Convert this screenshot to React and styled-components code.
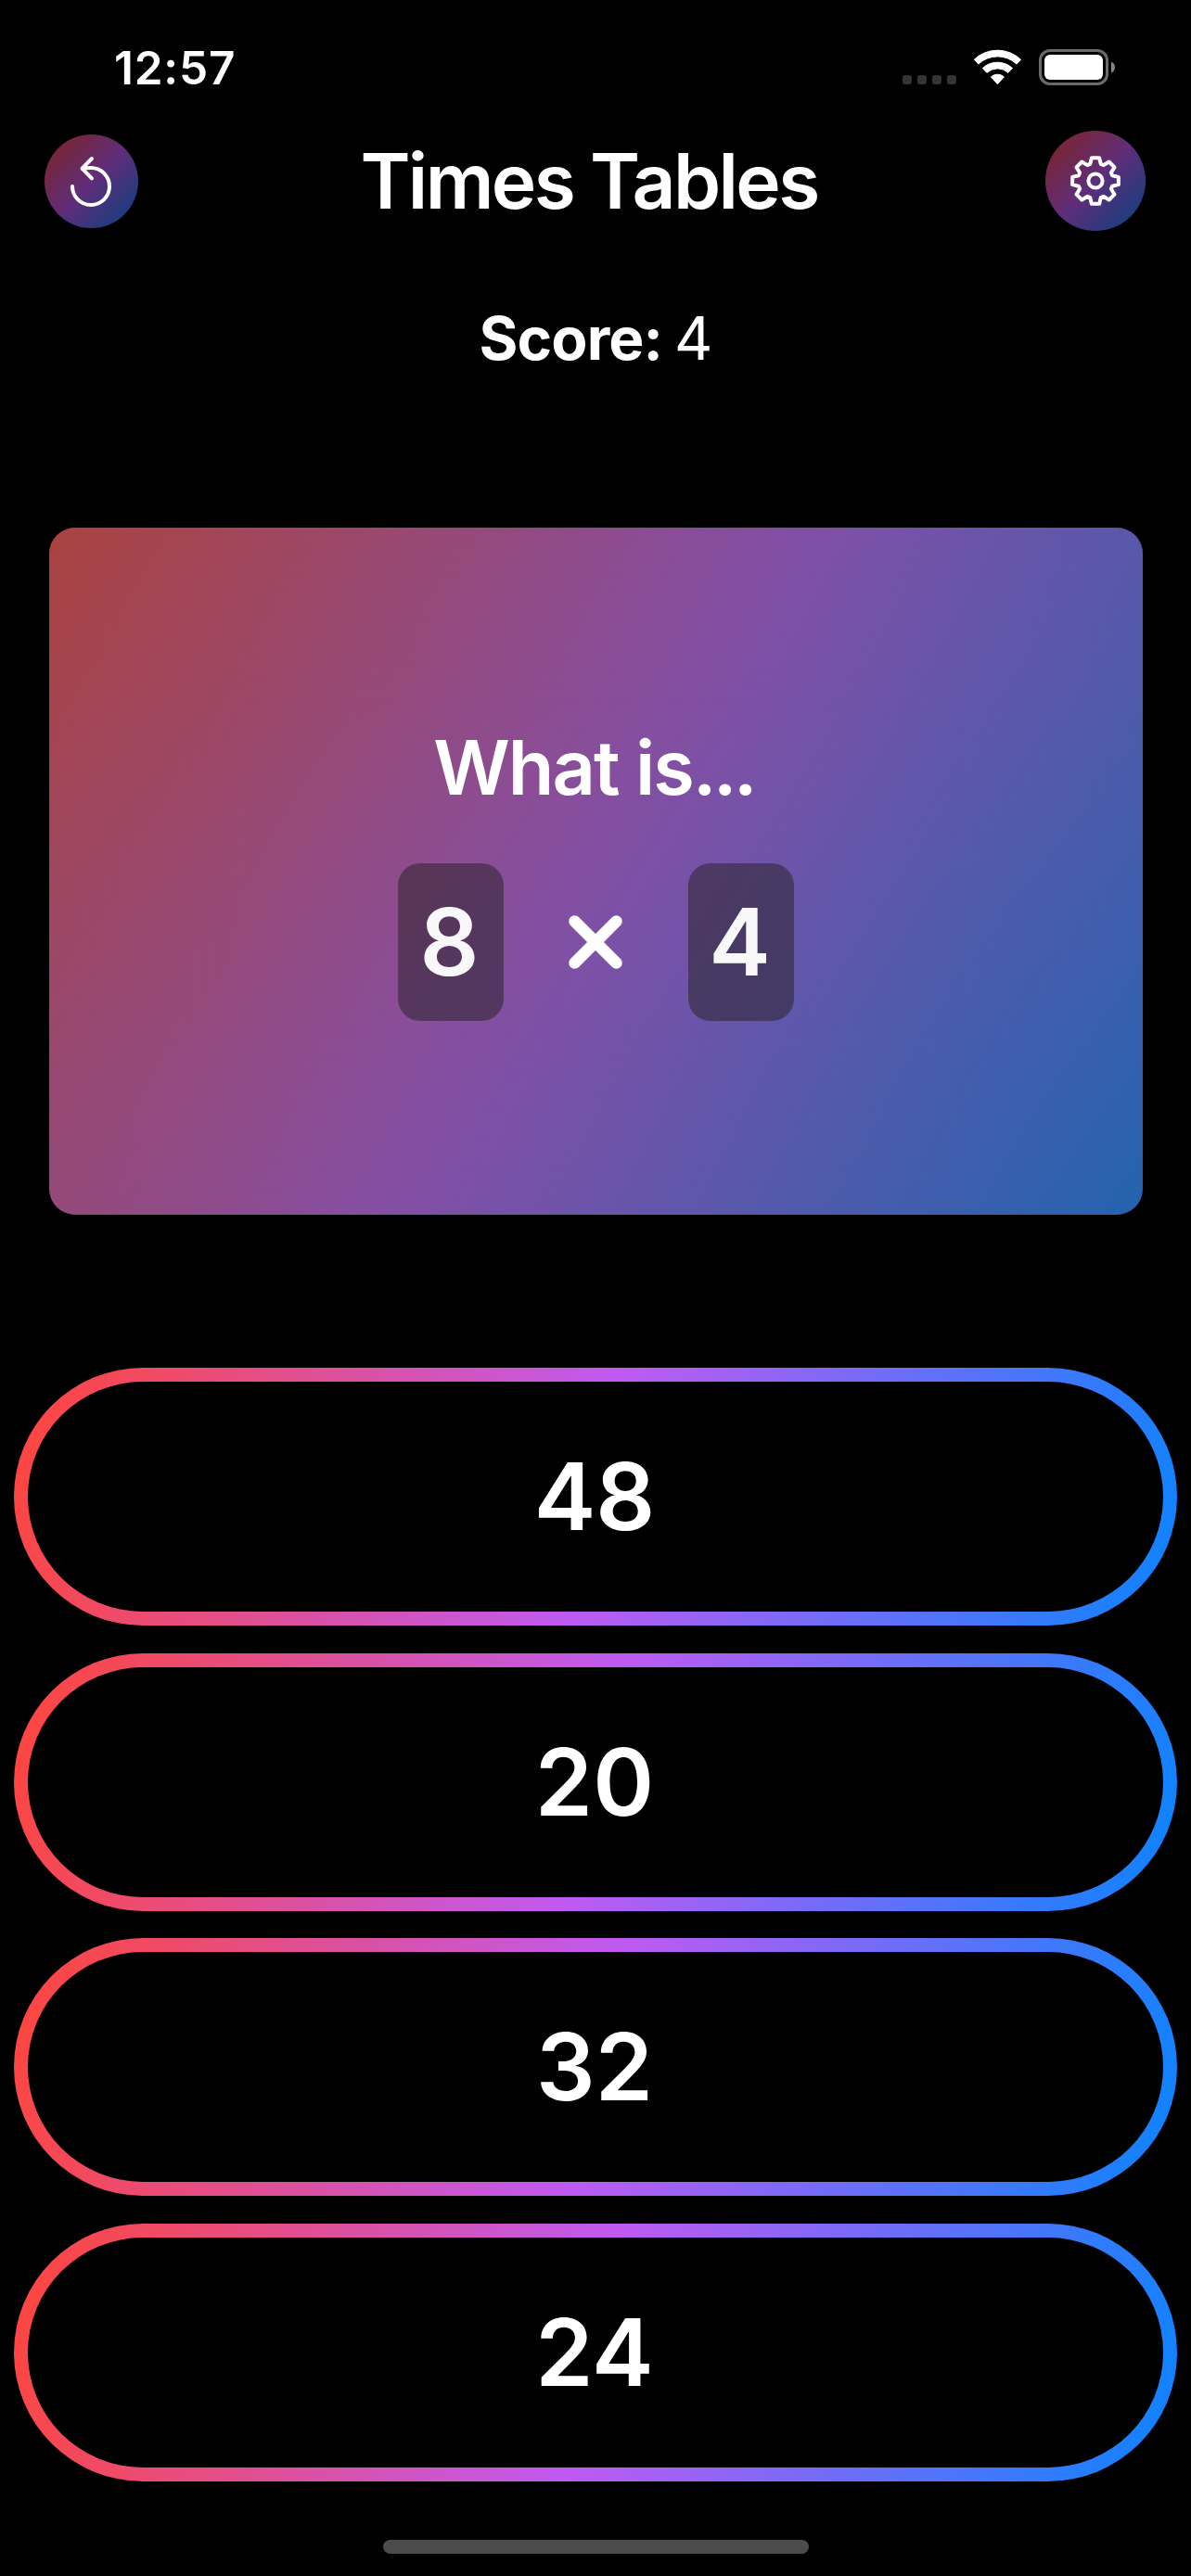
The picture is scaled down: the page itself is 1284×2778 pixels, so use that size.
import React from "react";
import styled, { createGlobalStyle } from "styled-components";

const GlobalStyle = createGlobalStyle`
  *, *::before, *::after { box-sizing: border-box; }
  html, body { margin: 0; background: #000; }
`;

const Screen = styled.main`
  width: 1284px;
  height: 2778px;
  overflow: hidden;
  display: flex;
  flex-direction: column;
  align-items: center;
  background: #000;
  color: #fff;
  font-family: Inter, "Liberation Sans", sans-serif;
`;

const StatusBar = styled.div`
  width: 100%;
  height: 141px;
  padding: 5px 82px 0 123px;
  display: flex;
  align-items: center;
  justify-content: space-between;
`;

const Clock = styled.time`
  font-size: 49.5px;
  font-weight: 600;
  line-height: 60px;
  letter-spacing: 0.8px;
`;

const StatusIcons = styled.div`
  display: flex;
  align-items: flex-end;
  height: 40px;
`;

const SignalDots = styled.div`
  display: flex;
  gap: 6px;
  margin: 0 19px 2px 0;
`;

const SignalDot = styled.span`
  width: 10px;
  height: 10px;
  border-radius: 3px;
  background: #343434;
`;

const WifiGlyph = styled.svg`
  width: 52px;
  height: 40px;
  margin-right: 18px;
`;

const BatteryGlyph = styled.svg`
  width: 82px;
  height: 40px;
`;

const Header = styled.header`
  width: 100%;
  height: 108px;
  padding: 0 49px 0 48px;
  display: flex;
  align-items: center;
  justify-content: space-between;
`;

const RoundButton = styled.button`
  width: ${(p) => p.$size}px;
  height: ${(p) => p.$size}px;
  padding: 0;
  border: 0;
  border-radius: 50%;
  color: #fff;
  background: linear-gradient(135deg, #80231d 0%, #602d79 50%, #054280 100%);

  svg { display: block; width: 100%; height: 100%; }
`;

const Title = styled.h1`
  margin: 0;
  padding: 2px 6px 0 0;
  font-size: 82px;
  font-weight: 600;
  line-height: 100px;
  letter-spacing: -2.65px;
`;

const Score = styled.p`
  margin: 76px 0 0;
  font-size: 64px;
  font-weight: 400;
  line-height: 80px;
  letter-spacing: -0.9px;
  word-spacing: -4px;

  strong { font-weight: 700; }
`;

const QuestionCard = styled.section`
  width: 1179px;
  height: 741px;
  margin-top: 164px;
  border-radius: 28px;
  overflow: hidden;
`;

const CardGradient = styled.div`
  height: 100%;
  background: linear-gradient(122.1deg, #ad433c 0%, #844fa7 50%, #2065b0 100%);
`;

const CardContent = styled.div`
  height: 100%;
  padding-top: 209px;
  display: flex;
  flex-direction: column;
  align-items: center;
  backdrop-filter: blur(88px);
`;

const Prompt = styled.h2`
  margin: 0;
  padding-right: 4px;
  font-size: 81px;
  font-weight: 600;
  line-height: 100px;
  letter-spacing: -2px;

  span { letter-spacing: -3.8px; }
`;

const Equation = styled.div`
  margin-top: 53px;
  width: 427px;
  display: flex;
  align-items: center;
  justify-content: space-between;
`;

const Factor = styled.span`
  width: 114px;
  height: 170px;
  padding-right: 2px;
  border-radius: 24px;
  display: grid;
  place-items: center;
  background: rgba(43, 36, 44, 0.55);
  color: #f8f7fa;
  font-size: 100px;
  font-weight: 600;
  line-height: 1;
`;

const TimesSign = styled.svg`
  width: 58px;
  height: 58px;
`;

const Answers = styled.div`
  margin-top: 165px;
  display: flex;
  flex-direction: column;
  gap: 29.67px;
`;

const AnswerButton = styled.button`
  width: 1254px;
  height: 278px;
  padding: 0 2px 0 0;
  border: 15px solid transparent;
  border-radius: 139px;
  background:
    linear-gradient(#000, #000) padding-box,
    linear-gradient(102.5deg, #ff453a 0%, #bf5af2 50%, #0a84ff 100%) border-box;
  color: #fff;
  font-family: inherit;
  font-size: 100px;
  font-weight: 600;
  line-height: 1;
`;

const HomeIndicator = styled.div`
  width: 459px;
  height: 15px;
  margin-top: 63px;
  border-radius: 8px;
  background: #4c4c4c;
`;

const point = (radius, degrees) => {
  const a = (degrees * Math.PI) / 180;
  return `${(radius * Math.sin(a)).toFixed(2)} ${(-radius * Math.cos(a)).toFixed(2)}`;
};

const band = (outer, inner, half) =>
  `M${point(outer, -half)}A${outer} ${outer} 0 0 1 ${point(outer, half)}L${point(inner, half)}` +
  (inner ? `A${inner} ${inner} 0 0 0 ${point(inner, -half)}Z` : "Z");

const gearOutline =
  Array.from({ length: 8 }, (_, i) => i * 45)
    .map((t, i) =>
      `${i ? "L" : "M"}${point(19, t - 17.5)}L${point(25.2, t - 9.5)}L${point(25.2, t + 9.5)}L${point(19, t + 17.5)}`)
    .join("") + "Z";

const ResetIcon = () => (
  <svg viewBox="0 0 101 101" fill="none" stroke="currentColor" strokeWidth="4" strokeLinecap="round" strokeLinejoin="round">
    <path d="M30 56A20 20 0 1 0 50 36Q45 36 41 37" />
    <path d="M51 26L40.5 36.7L51 47.3" />
  </svg>
);

const GearIcon = () => (
  <svg viewBox="-54 -54 108 108" fill="none" stroke="currentColor" strokeWidth="4" strokeLinejoin="round">
    <path d={gearOutline} />
    <circle r="7.6" />
  </svg>
);

const Wifi = () => (
  <WifiGlyph viewBox="-25.4 -37.7 52 40" fill="#fff" stroke="#fff" strokeWidth="1" strokeLinejoin="round">
    <path d={band(36.5, 29.8, 43.5)} />
    <path d={band(23.5, 16.8, 43)} />
    <path d={band(10.5, 0, 42)} />
  </WifiGlyph>
);

const Battery = () => (
  <BatteryGlyph viewBox="0 0 82 40" fill="none">
    <rect x="1.5" y="1.5" width="72" height="36" rx="10.5" stroke="#6b6b6b" strokeWidth="3" />
    <rect x="6" y="6" width="63" height="27" rx="6" fill="#fff" />
    <path d="M78 13.5Q82 15.5 82 19.5Q82 23.5 78 25.5Z" fill="#858585" />
  </BatteryGlyph>
);

const answers = [48, 20, 32, 24];

export default function App() {
  return (
    <Screen>
      <GlobalStyle />
      <StatusBar>
        <Clock>12:57</Clock>
        <StatusIcons>
          <SignalDots>
            {[0, 1, 2, 3].map((n) => <SignalDot key={n} />)}
          </SignalDots>
          <Wifi />
          <Battery />
        </StatusIcons>
      </StatusBar>
      <Header>
        <RoundButton $size={101} aria-label="Restart"><ResetIcon /></RoundButton>
        <Title>Times Tables</Title>
        <RoundButton $size={108} aria-label="Settings"><GearIcon /></RoundButton>
      </Header>
      <Score><strong>Score:</strong> 4</Score>
      <QuestionCard>
        <CardGradient>
          <CardContent>
            <Prompt>What is<span>...</span></Prompt>
            <Equation>
              <Factor>8</Factor>
              <TimesSign viewBox="0 0 58 58" stroke="#fff" strokeWidth="12.5" strokeLinecap="round">
                <path d="M6.5 6.5L51.5 51.5M51.5 6.5L6.5 51.5" />
              </TimesSign>
              <Factor>4</Factor>
            </Equation>
          </CardContent>
        </CardGradient>
      </QuestionCard>
      <Answers>
        {answers.map((value) => <AnswerButton key={value}>{value}</AnswerButton>)}
      </Answers>
      <HomeIndicator />
    </Screen>
  );
}
